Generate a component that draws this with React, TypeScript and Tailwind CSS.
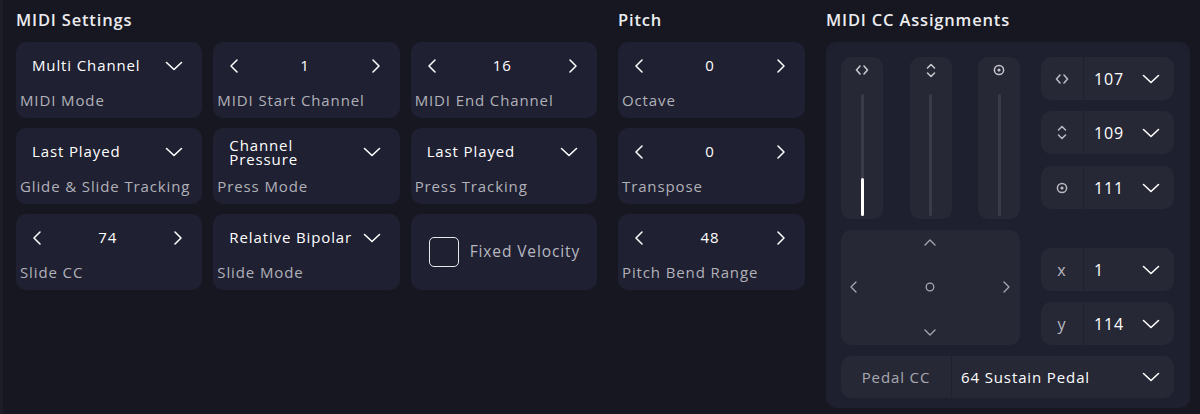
import type { ReactNode } from "react";

const FONT = { fontFamily: "'Open Sans', 'Noto Sans', sans-serif" };

function ChevronDown({ className = "" }: { className?: string }) {
  return (
    <svg width="18" height="10" viewBox="0 0 18 10" className={className} fill="none">
      <polyline points="1.5,1.5 9,8.5 16.5,1.5" stroke="currentColor" strokeWidth="1.6" strokeLinecap="round" strokeLinejoin="round" />
    </svg>
  );
}

function ArrowLeft() {
  return (
    <svg width="10" height="14" viewBox="0 0 10 14" fill="none">
      <polyline points="8,1 2,7 8,13" stroke="currentColor" strokeWidth="1.5" strokeLinecap="round" strokeLinejoin="round" />
    </svg>
  );
}

function ArrowRight() {
  return (
    <svg width="10" height="14" viewBox="0 0 10 14" fill="none">
      <polyline points="2,1 8,7 2,13" stroke="currentColor" strokeWidth="1.5" strokeLinecap="round" strokeLinejoin="round" />
    </svg>
  );
}

function IconLR() {
  return (
    <svg width="14" height="10" viewBox="0 0 14 10" fill="none">
      <polyline points="5,1 1.5,5 5,9" stroke="currentColor" strokeWidth="1.6" strokeLinecap="round" strokeLinejoin="round" />
      <polyline points="9,1 12.5,5 9,9" stroke="currentColor" strokeWidth="1.6" strokeLinecap="round" strokeLinejoin="round" />
    </svg>
  );
}

function IconUD() {
  return (
    <svg width="10" height="15" viewBox="0 0 10 15" fill="none">
      <polyline points="1.5,5 5,1.5 8.5,5" stroke="currentColor" strokeWidth="1.6" strokeLinecap="round" strokeLinejoin="round" />
      <polyline points="1.5,10 5,13.5 8.5,10" stroke="currentColor" strokeWidth="1.6" strokeLinecap="round" strokeLinejoin="round" />
    </svg>
  );
}

function IconDot() {
  return (
    <svg width="12" height="12" viewBox="0 0 12 12" fill="none">
      <circle cx="6" cy="6" r="4.6" stroke="currentColor" strokeWidth="1.5" />
      <circle cx="6" cy="6" r="1.6" fill="currentColor" />
    </svg>
  );
}

function Card({ children, label }: { children: ReactNode; label?: string }) {
  return (
    <div className="flex h-[76px] flex-col rounded-[10px] bg-[#1f2031]">
      <div className="flex h-[47px] items-center px-4">{children}</div>
      {label && <div className="mt-[2px] px-[4px] text-[15px] leading-[18px] text-[#b1b1b9]">{label}</div>}
    </div>
  );
}

function SelectCard({ value, label, wrap }: { value: string; label: string; wrap?: boolean }) {
  return (
    <Card label={label}>
      <div className="flex w-full items-center justify-between pr-[3px] text-white">
        <span className={wrap ? "w-[100px] text-[15px] leading-[14px] font-medium" : "text-[15px] font-medium"}>{value}</span>
        <ChevronDown />
      </div>
    </Card>
  );
}

function StepCard({ value, label }: { value: string; label: string }) {
  return (
    <Card label={label}>
      <div className="flex w-full items-center justify-between pr-[3px] text-white">
        <ArrowLeft />
        <span className="text-[15px] font-medium">{value}</span>
        <ArrowRight />
      </div>
    </Card>
  );
}

function CheckCard({ label }: { label: string }) {
  return (
    <div className="flex h-[76px] items-center gap-[11px] rounded-[10px] bg-[#1f2031] pl-[18px]">
      <div className="h-[30px] w-[30px] rounded-[5px] border-[1.5px] border-[#e8e8ec]" />
      <span className="text-[15.5px] text-[#b8b8c0]">{label}</span>
    </div>
  );
}

function Slider({ icon, fill }: { icon: ReactNode; fill?: number }) {
  return (
    <div className="flex h-[162px] w-[42px] flex-col items-center rounded-[10px] bg-[#272836] pt-[7px] text-[#c6c6cc]">
      <div className="flex h-[12px] items-center">{icon}</div>
      <div className="relative mt-[18px] h-[122px] w-[3px] rounded-full bg-[#3a3b4a]">
        {fill !== undefined && (
          <div className="absolute bottom-0 left-0 w-[3px] rounded-full bg-white" style={{ height: `${fill}px` }} />
        )}
      </div>
    </div>
  );
}

function CCSelect({ icon, value }: { icon: ReactNode; value: string }) {
  return (
    <div className="flex h-[43px] w-[133px] items-center rounded-[10px] bg-[#272836]">
      <div className="flex h-full w-[43px] items-center justify-center border-r border-[#1f2030] text-[#b8b8c0]">{icon}</div>
      <div className="flex flex-1 items-center justify-between pl-[10px] pr-[14px] text-white">
        <span className="text-[16px]">{value}</span>
        <ChevronDown />
      </div>
    </div>
  );
}

export default function App() {
  return (
    <div
      className="h-[414px] w-[1200px] overflow-hidden border-l-[3px] border-[#1c1d27] bg-[#161720] tracking-[0.055em]"
      style={FONT}
    >
      <div className="flex gap-[21px] pl-[13px]">
        <section className="w-[581px]">
          <h2 className="mt-[8px] h-[34px] text-[16.5px] font-semibold tracking-[0.05em] text-[#ececf0]">MIDI Settings</h2>
          <div className="grid grid-cols-3 gap-x-[11px] gap-y-[10px]">
            <SelectCard value="Multi Channel" label="MIDI Mode" />
            <StepCard value="1" label="MIDI Start Channel" />
            <StepCard value="16" label="MIDI End Channel" />
            <SelectCard value="Last Played" label="Glide & Slide Tracking" />
            <SelectCard value="Channel Pressure" label="Press Mode" wrap />
            <SelectCard value="Last Played" label="Press Tracking" />
            <StepCard value="74" label="Slide CC" />
            <SelectCard value="Relative Bipolar" label="Slide Mode" />
            <CheckCard label="Fixed Velocity" />
          </div>
        </section>
        <section className="w-[187px]">
          <h2 className="mt-[8px] h-[34px] text-[16.5px] font-semibold tracking-[0.05em] text-[#ececf0]">Pitch</h2>
          <div className="flex flex-col gap-[10px]">
            <StepCard value="0" label="Octave" />
            <StepCard value="0" label="Transpose" />
            <StepCard value="48" label="Pitch Bend Range" />
          </div>
        </section>
        <section className="w-[364px]">
          <h2 className="mt-[8px] h-[34px] text-[16.5px] font-semibold tracking-[0.05em] text-[#ececf0]">MIDI CC Assignments</h2>
          <div className="h-[366px] rounded-[10px] bg-[#1e1f2f] px-[15px] pt-[15px]">
            <div className="flex gap-[21px]">
              <div className="flex w-[179px] flex-col gap-[11px]">
                <div className="flex justify-between">
                  <Slider icon={<IconLR />} fill={38} />
                  <Slider icon={<IconUD />} />
                  <Slider icon={<IconDot />} />
                </div>
                <div className="grid h-[115px] grid-cols-3 grid-rows-3 rounded-[10px] bg-[#272836] text-[#a8a8b0]">
                  <div />
                  <div className="flex items-start justify-center pt-[8px]">
                    <svg width="12" height="8" viewBox="0 0 12 8" fill="none"><polyline points="1,7 6,2 11,7" stroke="currentColor" strokeWidth="1.3" strokeLinecap="round" strokeLinejoin="round" /></svg>
                  </div>
                  <div />
                  <div className="flex items-center justify-start pl-[8px]">
                    <svg width="8" height="12" viewBox="0 0 8 12" fill="none"><polyline points="7,1 2,6 7,11" stroke="currentColor" strokeWidth="1.3" strokeLinecap="round" strokeLinejoin="round" /></svg>
                  </div>
                  <div className="flex items-center justify-center">
                    <svg width="10" height="10" viewBox="0 0 10 10" fill="none"><circle cx="5" cy="5" r="3.8" stroke="currentColor" strokeWidth="1.3" /></svg>
                  </div>
                  <div className="flex items-center justify-end pr-[9px]">
                    <svg width="8" height="12" viewBox="0 0 8 12" fill="none"><polyline points="1,1 6,6 1,11" stroke="currentColor" strokeWidth="1.3" strokeLinecap="round" strokeLinejoin="round" /></svg>
                  </div>
                  <div />
                  <div className="flex items-end justify-center pb-[8px]">
                    <svg width="12" height="8" viewBox="0 0 12 8" fill="none"><polyline points="1,1 6,6 11,1" stroke="currentColor" strokeWidth="1.3" strokeLinecap="round" strokeLinejoin="round" /></svg>
                  </div>
                  <div />
                </div>
              </div>
              <div className="flex flex-col">
                <CCSelect icon={<IconLR />} value="107" />
                <div className="mt-[11px]"><CCSelect icon={<IconUD />} value="109" /></div>
                <div className="mt-[12px]"><CCSelect icon={<IconDot />} value="111" /></div>
                <div className="mt-[39px]"><CCSelect icon={<span className="text-[16px]">x</span>} value="1" /></div>
                <div className="mt-[11px]"><CCSelect icon={<span className="text-[16px]">y</span>} value="114" /></div>
              </div>
            </div>
            <div className="mt-[11px] flex h-[42px] w-[333px] items-center rounded-[10px] bg-[#272836]">
              <div className="flex h-full w-[111px] items-center justify-center border-r border-[#1f2030] text-[15px] text-[#a8a8b0]">Pedal CC</div>
              <div className="flex flex-1 items-center justify-between pl-[9px] pr-[14px] text-white">
                <span className="text-[15px] font-medium">64 Sustain Pedal</span>
                <ChevronDown />
              </div>
            </div>
          </div>
        </section>
      </div>
    </div>
  );
}
